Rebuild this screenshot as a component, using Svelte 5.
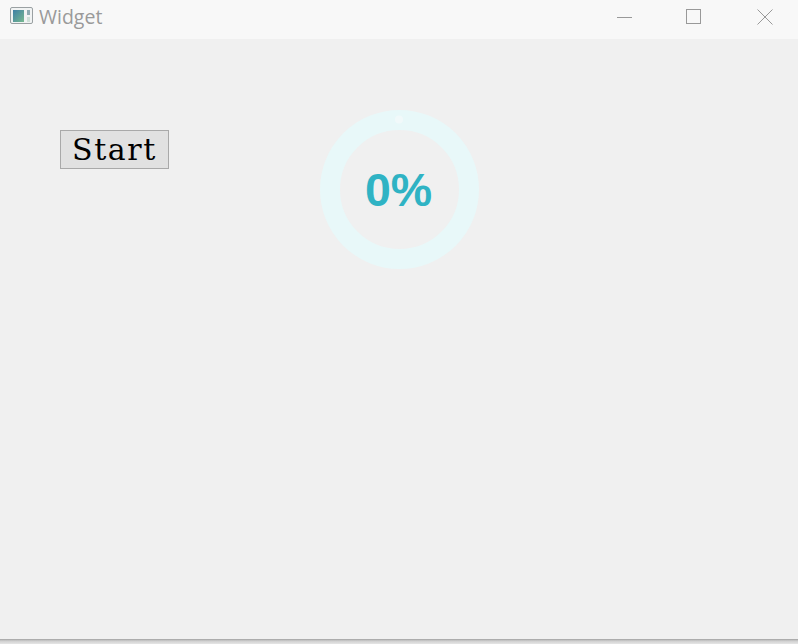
<script>
  let percent = $state(0);
  const size = 160;
  const radius = 69.5;
</script>

<div class="window">
  <header class="titlebar">
    <svg class="app-icon" width="24" height="18" viewBox="0 0 24 18">
      <defs>
        <linearGradient id="pane" x1="0" y1="0" x2="1" y2="1">
          <stop offset="0" stop-color="#3f7fa6" />
          <stop offset="1" stop-color="#76b98f" />
        </linearGradient>
      </defs>
      <rect x="0.5" y="0.5" width="22" height="16" rx="1.5" fill="#f1f3f3" stroke="#9aa0a2" />
      <rect x="3" y="3" width="11" height="12" fill="url(#pane)" />
      <rect x="17" y="3" width="3" height="5" fill="#8fabb2" />
      <rect x="17" y="10" width="3" height="5" fill="#cfe0d8" />
    </svg>
    <span class="title">Widget</span>
    <div class="controls">
      <svg width="16" height="16" viewBox="0 0 16 16"><path d="M0 8.5H15" stroke="#999" fill="none" /></svg>
      <svg class="max" width="16" height="16" viewBox="0 0 16 16"><rect x="0.5" y="0.5" width="14" height="14" stroke="#999" fill="none" /></svg>
      <svg width="16" height="16" viewBox="0 0 16 16"><path d="M0.5 0.5L15.5 15.5M15.5 0.5L0.5 15.5" stroke="#999" fill="none" /></svg>
    </div>
  </header>

  <main class="content">
    <button class="start"><span class="label">Start</span></button>
    <svg class="ring" width={size} height={size} viewBox="0 0 160 160">
      <circle cx="79.5" cy="79.5" r={radius} fill="none" stroke="#e8f8f9" stroke-width="20" />
      <circle cx="79" cy="9.5" r="4" fill="#f1f9fa" />
      <text x="78.5" y="96" text-anchor="middle" class="percent">{percent}%</text>
    </svg>
  </main>

  <div class="edge"></div>
</div>

<style>
  :global(body) {
    margin: 0;
    background: #f0f0f0;
  }

  .window {
    width: 798px;
    height: 644px;
    display: flex;
    flex-direction: column;
    overflow: hidden;
    background: #f0f0f0;
  }

  .titlebar {
    height: 39px;
    flex: none;
    display: flex;
    align-items: center;
    padding-left: 10px;
    background: #f8f8f8;
    box-sizing: border-box;
  }

  .app-icon {
    margin-top: -7px;
  }

  .title {
    margin-left: 5px;
    margin-top: -7px;
    font-family: "Open Sans", sans-serif;
    font-size: 19.5px;
    color: #9a9a9a;
  }

  .controls {
    margin-left: auto;
    margin-right: 25px;
    margin-top: -6px;
    display: flex;
    gap: 53px;
  }

  .max {
    margin-right: 2px;
  }

  .content {
    flex: 1;
    display: flex;
    align-items: flex-start;
    padding-left: 60px;
  }

  .start {
    width: 109px;
    height: 39px;
    margin-top: 91px;
    padding: 1px 0 0;
    box-sizing: border-box;
    border: 1px solid #a9a9a9;
    border-radius: 0;
    background: #e1e1e1;
    font-family: "DejaVu Serif", serif;
    font-size: 30px;
    letter-spacing: 1.6px;
    line-height: 36px;
    color: #000;
  }

  .ring {
    margin-top: 71px;
    margin-left: 151px;
  }

  .percent {
    font-family: "Liberation Sans", sans-serif;
    font-size: 46.5px;
    font-weight: 700;
    fill: #2fb3c4;
  }

  .edge {
    height: 5px;
    flex: none;
    background: linear-gradient(#a0a0a0, #cfcfcf 40%, #e6e6e6);
  }
</style>
